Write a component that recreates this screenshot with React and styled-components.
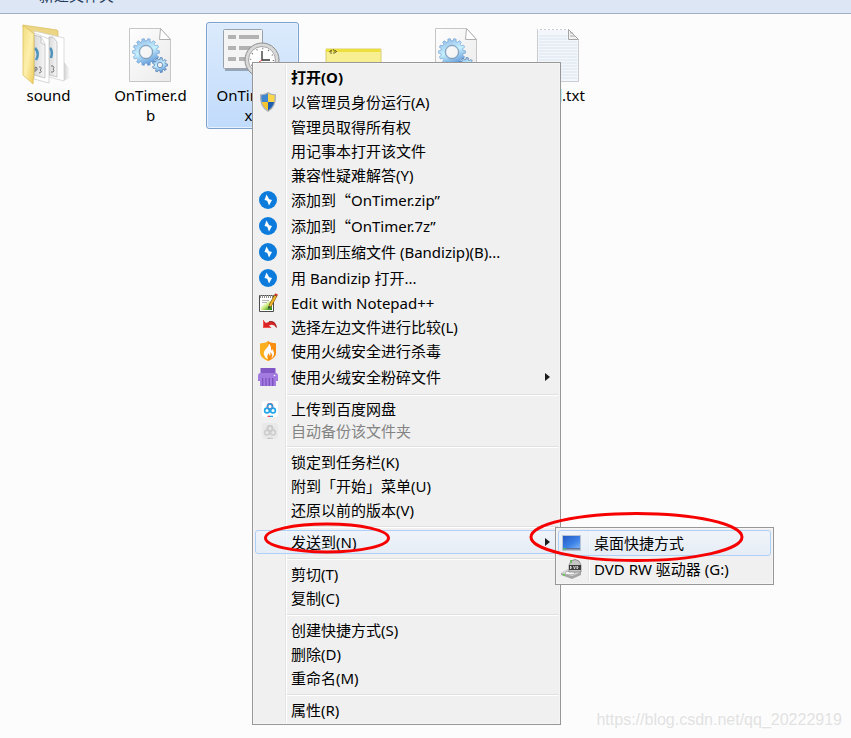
import React from 'react';
import styled, { createGlobalStyle, css } from 'styled-components';

const GlobalStyle = createGlobalStyle`
  body {
    margin: 0;
    background: #fcfcfc;
    color: #000;
    font-family: 'Noto Sans', 'Noto Sans CJK SC', sans-serif;
    font-size: 15px;
  }
`;

const Page = styled.div`
  position: relative;
  display: flex;
  flex-direction: column;
  min-height: 100vh;
  overflow: hidden;
`;

const Toolbar = styled.header`
  display: flex;
  align-items: flex-end;
  gap: 36px;
  height: 14px;
  box-sizing: border-box;
  padding-bottom: 8px;
  overflow: hidden;
  background: #dce6f4;
  border-bottom: 1px solid #a0afc3;
  color: #1e395b;
  line-height: 20px;
`;

const ToolbarMark = styled.span`
  width: 3px;
  height: 5px;
  border-top: 1px solid #5a6f8c;
`;

const Files = styled.main`
  display: flex;
  flex: 1;
  align-items: flex-start;
  gap: 9px;
  padding: 8px 2px;
`;

const File = styled.figure`
  display: flex;
  flex-direction: column;
  align-items: center;
  flex: none;
  box-sizing: border-box;
  width: 93px;
  min-height: 107px;
  margin: 0;
  border: 1px solid transparent;
  border-radius: 3px;

  ${(props) =>
    props.$selected &&
    css`
      border-color: #7da2ce;
      background: linear-gradient(#dcebfc, #c1dbfc);
      box-shadow: inset 0 0 0 1px #e4f0fd;
    `}
`;

const FileName = styled.figcaption`
  width: 76px;
  line-height: 20px;
  text-align: center;
  word-break: break-all;
`;

const Menu = styled.div`
  position: absolute;
  box-sizing: border-box;
  padding: 2px;
  border: 1px solid #979797;
  background:
    linear-gradient(90deg, #e2e3e3 50%, #fff 50%) 32px 2px / 2px calc(100% - 4px) no-repeat,
    #f0f0f0;
  box-shadow: inset 0 0 0 1px #f5f5f5;
`;

const ContextMenu = styled(Menu)`
  top: 62px;
  left: 252px;
  width: 309px;
`;

const SubMenu = styled(Menu)`
  top: 527px;
  left: 555px;
  width: 219px;
`;

const Item = styled.button`
  display: flex;
  align-items: center;
  box-sizing: border-box;
  width: 100%;
  height: ${(props) => props.$height || 24}px;
  padding: 0 7px 0 0;
  border: 1px solid transparent;
  border-radius: 3px;
  background: none;
  color: #000;
  font: inherit;
  font-weight: ${(props) => (props.$bold ? 700 : 400)};
  line-height: 20px;
  text-align: left;
  white-space: pre;

  &:disabled {
    color: #838383;
  }

  ${(props) =>
    props.$active &&
    css`
      border-color: #aecff7;
      background: linear-gradient(rgba(240, 246, 253, 0.7), rgba(225, 235, 248, 0.7));
    `}
`;

const IconSlot = styled.span`
  display: flex;
  justify-content: center;
  flex: none;
  width: 24px;
  margin-right: 11px;
`;

const ItemText = styled.span`
  flex: 1;
`;

const Wide = styled.span`
  font-family: 'Noto Sans CJK SC', sans-serif;
`;

const Separator = styled.hr`
  height: 1px;
  margin: 4px 0 2px 32px;
  border: 0;
  border-top: 1px solid #e0e0e0;
  background: #fff;
`;

const Marks = styled.svg`
  position: absolute;
  top: 505px;
  left: 255px;
  pointer-events: none;
`;

const Watermark = styled.footer`
  padding: 0 9px 8px;
  color: #e2e2e2;
  font-family: 'Liberation Sans', Arial, sans-serif;
  font-size: 16px;
  line-height: 20px;
  text-align: right;
  text-shadow: -1px -1px 0 #fff;
`;

// cog outline centred on cx, cy with a round hole
function gearPath(cx, cy, outer, inner, hole, teeth) {
  const step = (Math.PI * 2) / teeth;
  const points = [];
  for (let i = 0; i < teeth; i += 1) {
    [
      [-0.32, inner],
      [-0.2, outer],
      [0.2, outer],
      [0.32, inner],
    ].forEach(([offset, r]) => {
      const a = (i + offset) * step;
      points.push(`${(cx + r * Math.cos(a)).toFixed(2)} ${(cy + r * Math.sin(a)).toFixed(2)}`);
    });
  }
  return `M${points.join('L')}Z M${cx - hole} ${cy}a${hole} ${hole} 0 1 0 ${hole * 2} 0a${hole} ${hole} 0 1 0 ${-hole * 2} 0Z`;
}

const FolderIcon = () => (
  <svg width="63" height="62" viewBox="0 0 63 62">
    <defs>
      <linearGradient id="flap" x1="0" y1="0" x2="1" y2="1">
        <stop offset="0" stopColor="#f3dc7e" />
        <stop offset="0.5" stopColor="#fdf0ae" />
        <stop offset="1" stopColor="#eecb58" />
      </linearGradient>
      <linearGradient id="sheet" x1="0" y1="0" x2="1" y2="0">
        <stop offset="0" stopColor="#d9d9d9" />
        <stop offset="1" stopColor="#f6f6f6" />
      </linearGradient>
      <linearGradient id="folderShade" x1="0" y1="0" x2="1" y2="0">
        <stop offset="0" stopColor="#ccc" />
        <stop offset="1" stopColor="#fcfcfc" />
      </linearGradient>
    </defs>
    <path d="M46 58l7-3-1-10-5-6z" fill="url(#folderShade)" />
    <path d="M6 2l34 5 1 1v30H10z" fill="#ecd685" stroke="#d8bb5a" strokeWidth="0.7" />
    <path d="M17 8l30 7v43l-15-4-15-8z" fill="#fff" stroke="#cfcfcf" strokeWidth="0.7" />
    <path d="M32 14h4l4 5v35l-8-2z" fill="url(#sheet)" stroke="#aaa" strokeWidth="0.6" />
    <path d="M33 25q3 3 1 10" fill="none" stroke="#4d93bb" strokeWidth="2.500" />
    <path d="M34 43h2q2 2 0 3q2 2 0 3h-2" fill="none" stroke="#777" />
    <path d="M17 10l15 6v44l-15-4z" fill="#fff" stroke="#c6c6c6" strokeWidth="0.7" />
    <path d="M17 12l7 2 4 7v34l-11-3z" fill="url(#sheet)" stroke="#aaa" strokeWidth="0.6" />
    <path d="M24 14v6l4 2" fill="#fafafa" stroke="#aaa" strokeWidth="0.6" />
    <path d="M18 25q5 5 1 12" fill="none" stroke="#4d93bb" strokeWidth="2.500" />
    <path d="M18 49v-5q3 0 2 3h-2M22 44q4 0 1 3q3 2-1 3" fill="none" stroke="#777" />
    <path d="M6 2l11 9v38l-1 12-10-9z" fill="url(#flap)" stroke="#d9bb55" strokeWidth="0.7" />
  </svg>
);

const GearFileIcon = () => (
  <svg width="63" height="62" viewBox="0 0 63 62">
    <defs>
      <linearGradient id="paper" x1="0" y1="0" x2="1" y2="1">
        <stop offset="0" stopColor="#fefefe" />
        <stop offset="1" stopColor="#eaeaea" />
      </linearGradient>
      <linearGradient id="gear" x1="0.2" y1="0" x2="0.6" y2="1">
        <stop offset="0" stopColor="#8fb8e4" />
        <stop offset="0.5" stopColor="#c6f1ff" />
        <stop offset="1" stopColor="#5b93d6" />
      </linearGradient>
    </defs>
    <path d="M10.500 5.500h31l10 11v42h-41z" fill="url(#paper)" stroke="#c6c6c6" />
    <path d="M41.500 5.500l-1 11h11z" fill="#fff" stroke="#b0b0b0" />
    <path d={gearPath(27, 29, 13.5, 11.2, 6.3, 14)} fill="url(#gear)" fillRule="evenodd" stroke="#6a9bd0" strokeWidth="0.6" />
    <circle cx="27" cy="29" r="6.800" fill="none" stroke="#8195aa" strokeWidth="0.8" />
    <path d={gearPath(41, 42, 7.5, 5.5, 2.7, 9)} fill="url(#gear)" fillRule="evenodd" stroke="#567fb3" strokeWidth="0.8" />
  </svg>
);

const TaskIcon = () => (
  <svg width="63" height="62" viewBox="0 0 63 62">
    <path d="M4 46h38v2H4z" fill="#7d8b9c" opacity="0.7" />
    <rect x="2.500" y="6.500" width="39" height="39" rx="1" fill="#f4f4f4" stroke="#9aa1a8" />
    <path d="M7 14h8M7 25h8M7 36h8M18 14h20M18 25h12M18 36h6" stroke="#b2b2b2" strokeWidth="4" />
    <circle cx="41" cy="37" r="17" fill="#d9d9d9" stroke="#8d8d8d" />
    <circle cx="41" cy="37" r="13.500" fill="#fff" stroke="#a5a5a5" />
    <circle cx="41" cy="37" r="11.500" fill="none" stroke="#777" strokeWidth="1.500" strokeDasharray="1 5.020" />
    <path d="M41 28v9h8" fill="none" stroke="#333" strokeWidth="1.300" />
    <path d="M41 37l-3 2" stroke="#d84b4b" />
  </svg>
);

const NoteIcon = () => (
  <svg width="63" height="62" viewBox="0 0 63 62">
    <path d="M3 26h55v30H3z" fill="#f7ef91" stroke="#d8cd72" />
    <path d="M3 26h54v3H3z" fill="#eddf3e" />
    <path d="M6 29l3-2M8 27v4M10 26l3 4M11 29v2M12 27l2 2" stroke="#6d6528" />
  </svg>
);

const TextFileIcon = () => (
  <svg width="63" height="62" viewBox="0 0 63 62">
    <path d="M10.500 6.500h31l10 11v41h-41z" fill="#f3f6fa" stroke="#c9cdd2" />
    <path
      d="M12 13h28M12 16h28M12 19h38M12 22h38M12 25h38M12 28h38M12 31h38M12 34h38M12 37h38M12 40h38M12 43h38M12 46h38M12 49h38M12 52h38M12 55h38"
      stroke="#dbe4ee"
    />
    <path d="M11 6.500h31" stroke="#fff" strokeDasharray="2 2" />
    <path d="M41.500 6.500v10h10z" fill="#f2f2f2" stroke="#a5a5a5" />
    <path d="M43 10h3M43 13h5" stroke="#aaa" />
  </svg>
);

const ShieldIcon = () => (
  <svg width="18" height="20" viewBox="0 0 18 20">
    <clipPath id="shield">
      <path d="M9 1.500q3 2 6.500 1.800Q16.500 14 9 18.500Q1.500 14 2.500 3.300Q6 3.500 9 1.500z" />
    </clipPath>
    <path d="M9 0q4 2.500 8 2.200Q18 15 9 20Q0 15 1 2.200Q5 2.500 9 0z" fill="#a9b1b8" />
    <g clipPath="url(#shield)">
      <path d="M0 0h9v10H0z" fill="#3e86cf" />
      <path d="M9 0h9v10H9z" fill="#fbd64b" />
      <path d="M0 10h9v10H0z" fill="#f5c52f" />
      <path d="M9 10h9v10H9z" fill="#1d5fae" />
    </g>
  </svg>
);

const BandizipIcon = () => (
  <svg width="18" height="18" viewBox="0 0 18 18">
    <circle cx="9" cy="9" r="9" fill="#0c7bdc" />
    <path d="M7.500 3.500L5.500 9l2.700.8L10 14.500l3-5.500-2.800-.8z" fill="#fff" />
  </svg>
);

const NotepadIcon = () => (
  <svg width="20" height="20" viewBox="0 0 20 20">
    <defs>
      <linearGradient id="pad" x1="0" y1="0" x2="1" y2="1">
        <stop offset="0.25" stopColor="#fff" />
        <stop offset="0.5" stopColor="#cdec7c" />
        <stop offset="0.9" stopColor="#2f8f14" />
      </linearGradient>
    </defs>
    <path d="M1.500 2.500h14v16h-14z" fill="#fff" stroke="#4c4c4c" />
    <path d="M3 8h11v9H3z" fill="url(#pad)" />
    <path d="M2 3.500h13" stroke="#8a8a8a" strokeWidth="3" strokeDasharray="1 1" />
    <path d="M4 7.500h7M4 9.500h5" stroke="#b5b5b5" />
    <path d="M18 2L12 13" stroke="#6b4a12" strokeWidth="3.200" />
    <path d="M17.500 3L12 13" stroke="#f4b52a" strokeWidth="2.200" />
    <path d="M17 1l2.500 1.500" stroke="#d2362c" strokeWidth="2" />
    <path d="M10.500 13l-.5 3 3-2z" fill="#333" />
  </svg>
);

const CompareIcon = () => (
  <svg width="18" height="18" viewBox="0 0 18 18">
    <path d="M4 2v8h8.500L10 7.500Q14.500 5 17.500 10Q17 0 7 5z" fill="#d92525" />
    <path d="M4.500 2v7.500h7" fill="none" stroke="#f4554e" />
    <path d="M10 3.500q6-1 7.500 6" fill="none" stroke="#7d2424" strokeWidth="0.8" />
  </svg>
);

const HuorongIcon = () => (
  <svg width="18" height="20" viewBox="0 0 18 20">
    <path d="M9 0l2 1.500 6 1v9Q17 17 9 20Q1 17 1 11.500v-9l6-1z" fill="#fcaf1c" />
    <path d="M9 0l2 1.500 6 1v9Q17 17 9 20z" fill="#f98d12" />
    <path d="M10 2.500q0 3-3 5.500q-3 3-2 6q1 3 4 4q-2-3 1-6q0 2 1 3q1-2 0-4q4 3 1 6.500q3-1.500 3-5.500q0-2-2-4q0 1-1 1.500Q12.500 5 10 2.500z" fill="#fff" />
  </svg>
);

const ShredderIcon = () => (
  <svg width="20" height="18" viewBox="0 0 20 18">
    <path d="M2.500 0h15v6h-15z" fill="#8158c6" />
    <path d="M0 7.500Q0 5 2 5h16q2 0 2 2.500V13H0z" fill="#a37ae0" />
    <path d="M2 10h16v7q-1 1-2 1H4q-1 0-2-1z" fill="#7c54c0" />
    <path d="M2 10h2v8H2zM5.300 10h2v8h-2zM8.600 10h2v8h-2zM12 10h2v8h-2zM15.500 10H18v8h-2.500z" fill="#a27ae0" />
    <circle cx="16.500" cy="7.500" r="0.8" fill="#fff" />
  </svg>
);

const CloudIcon = ({ muted }) => {
  const blue = muted ? '#cdcdcd' : '#20a4ea';
  const red = muted ? '#c2c2c2' : '#ee4c5b';
  return (
    <svg width="16" height="16" viewBox="0 0 16 16">
      <rect width="16" height="16" rx="3" fill={muted ? '#e9e9e9' : '#fff'} />
      <g fill="none" strokeWidth="1.600">
        <circle cx="8" cy="5.500" r="2.600" stroke={red} />
        <path d="M5.500 6Q5.500 3 8 3Q10.500 3 10.500 6" stroke={blue} />
        <circle cx="5" cy="9.500" r="2.400" stroke={blue} />
        <circle cx="11" cy="9.500" r="2.400" stroke={blue} />
        <path d="M5.500 15.500H8" stroke={red} />
        <path d="M8 15.500h3" stroke={blue} />
      </g>
    </svg>
  );
};

const CloudSlot = styled.span`
  padding-left: 4px;
  line-height: 0;
`;

const DesktopIcon = () => (
  <svg width="19" height="16" viewBox="0 0 19 16">
    <defs>
      <linearGradient id="screen" x1="0" y1="0" x2="1" y2="1">
        <stop offset="0" stopColor="#2459c2" />
        <stop offset="0.6" stopColor="#3d82e8" />
        <stop offset="1" stopColor="#7db3f4" />
      </linearGradient>
    </defs>
    <path d="M0 0h19v16H0z" fill="#b9c5d6" />
    <path d="M1 1h17v12H1z" fill="url(#screen)" />
    <path d="M1 13h17v1.500H1z" fill="#5c7290" />
    <path d="M1 13h3v1.500H1z" fill="#4bb56a" />
  </svg>
);

const DriveIcon = () => (
  <svg width="21" height="20" viewBox="0 0 21 20">
    <path d="M0 14l7-4 13 3v3l-9 4-11-4z" fill="#a5a5a5" />
    <path d="M0 14l7-4 13 3-9 4z" fill="#dadada" />
    <ellipse cx="9" cy="14" rx="5" ry="1.800" fill="#f7f7f7" stroke="#8d8d8d" strokeWidth="0.6" />
    <path d="M10 2q4-3 8 0l2 4v7H8V6z" fill="#c6c6c6" stroke="#777" strokeWidth="0.7" />
    <path d="M8 6h12v5H8z" fill="#3b3b3b" />
    <path d="M9.500 7v3q2-1.500 0-3M12.500 7l1 3 1-3M16 7v3q2-1.500 0-3" fill="none" stroke="#fff" strokeWidth="0.7" />
    <path d="M10 1v3" stroke="#57b947" strokeWidth="1.500" />
    <path d="M2 15.500l2 .8" stroke="#5bd044" strokeWidth="1.500" />
  </svg>
);

const Arrow = () => (
  <svg width="5" height="8" viewBox="0 0 5 8">
    <path d="M0 0l5 4-5 4z" fill="#1b1b1b" />
  </svg>
);

const files = [
  { name: 'sound', icon: <FolderIcon /> },
  { name: 'OnTimer.db', icon: <GearFileIcon /> },
  { name: 'OnTimer.exe', icon: <TaskIcon />, selected: true },
  { icon: <NoteIcon /> },
  { icon: <GearFileIcon /> },
  { name: '说明.txt', icon: <TextFileIcon /> },
];

const quoted = (name) => (
  <>
    添加到<Wide>“</Wide>{name}”
  </>
);

const groups = [
  [
    { text: '打开(O)', bold: true },
    { text: '以管理员身份运行(A)', icon: <ShieldIcon />, height: 26 },
    { text: '管理员取得所有权' },
    { text: '用记事本打开该文件' },
    { text: '兼容性疑难解答(Y)' },
    { text: quoted('OnTimer.zip'), icon: <BandizipIcon />, height: 26 },
    { text: quoted('OnTimer.7z'), icon: <BandizipIcon />, height: 26 },
    { text: '添加到压缩文件 (Bandizip)(B)...', icon: <BandizipIcon />, height: 26 },
    { text: '用 Bandizip 打开...', icon: <BandizipIcon />, height: 26 },
    { text: 'Edit with Notepad++', icon: <NotepadIcon /> },
    { text: '选择左边文件进行比较(L)', icon: <CompareIcon /> },
    { text: '使用火绒安全进行杀毒', icon: <HuorongIcon /> },
    { text: '使用火绒安全粉碎文件', icon: <ShredderIcon />, height: 27, more: true },
  ],
  [
    { text: '上传到百度网盘', icon: <CloudSlot><CloudIcon /></CloudSlot>, height: 22 },
    { text: '自动备份该文件夹', icon: <CloudSlot><CloudIcon muted /></CloudSlot>, height: 22, disabled: true },
  ],
  [{ text: '锁定到任务栏(K)' }, { text: '附到「开始」菜单(U)' }, { text: '还原以前的版本(V)' }],
  [{ text: '发送到(N)', active: true, more: true }],
  [{ text: '剪切(T)' }, { text: '复制(C)' }],
  [{ text: '创建快捷方式(S)' }, { text: '删除(D)' }, { text: '重命名(M)' }],
  [{ text: '属性(R)' }],
];

const sendTo = [
  { text: '桌面快捷方式', icon: <DesktopIcon />, height: 26, active: true },
  { text: 'DVD RW 驱动器 (G:)', icon: <DriveIcon />, height: 26 },
];

function MenuItem({ item }) {
  return (
    <Item
      type="button"
      role="menuitem"
      disabled={item.disabled}
      $height={item.height}
      $bold={item.bold}
      $active={item.active}
    >
      <IconSlot>{item.icon}</IconSlot>
      <ItemText>{item.text}</ItemText>
      {item.more && <Arrow />}
    </Item>
  );
}

function App() {
  return (
    <Page lang="zh-CN">
      <GlobalStyle />
      <Toolbar>
        <ToolbarMark />
        <span>新建文件夹</span>
      </Toolbar>
      <Files>
        {files.map((file, i) => (
          <File key={i} $selected={file.selected}>
            {file.icon}
            {file.name && <FileName>{file.name}</FileName>}
          </File>
        ))}
      </Files>
      <Watermark>https://blog.csdn.net/qq_20222919</Watermark>

      <ContextMenu role="menu">
        {groups.map((group, i) => (
          <React.Fragment key={i}>
            {i > 0 && <Separator />}
            {group.map((item, j) => (
              <MenuItem key={j} item={item} />
            ))}
          </React.Fragment>
        ))}
      </ContextMenu>
      <SubMenu role="menu">
        {sendTo.map((item) => (
          <MenuItem key={item.text} item={item} />
        ))}
      </SubMenu>
      <Marks width="500" height="60" viewBox="0 0 500 60" fill="none" stroke="#f60000" strokeWidth="3">
        <ellipse cx="72" cy="33" rx="61.500" ry="14" />
        <ellipse cx="381.500" cy="32" rx="105.500" ry="23.500" />
      </Marks>
    </Page>
  );
}

export default App;
